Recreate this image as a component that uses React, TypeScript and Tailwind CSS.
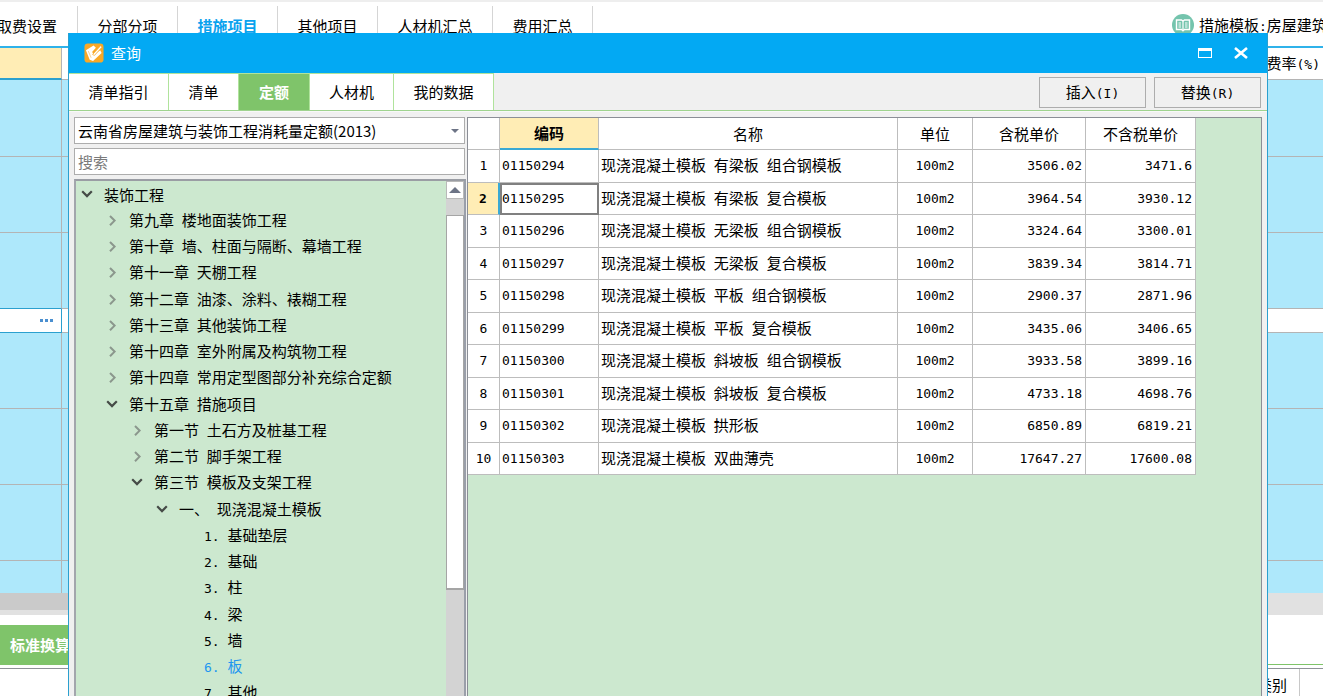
import { useState } from "react";
import clsx from "clsx";

type TreeNode = {
    label: string;
    level: number;
    state?: "open" | "closed";
}

type Quota = {
    code: string;
    name: string;
    taxPrice: string;
    price: string;
}

const projectTabs = ["分部分项", "措施项目", "其他项目", "人材机汇总", "费用汇总"];

const dialogTabs = [
    { label: "清单指引", width: "w-[100px]" },
    { label: "清单", width: "w-[70px]" },
    { label: "定额", width: "w-[71px]" },
    { label: "人材机", width: "w-[84px]" },
    { label: "我的数据", width: "w-[100px]" },
];

const tree: TreeNode[] = [
    { label: "装饰工程", level: 0, state: "open" },
    { label: "第九章 楼地面装饰工程", level: 1, state: "closed" },
    { label: "第十章 墙、柱面与隔断、幕墙工程", level: 1, state: "closed" },
    { label: "第十一章 天棚工程", level: 1, state: "closed" },
    { label: "第十二章 油漆、涂料、裱糊工程", level: 1, state: "closed" },
    { label: "第十三章 其他装饰工程", level: 1, state: "closed" },
    { label: "第十四章 室外附属及构筑物工程", level: 1, state: "closed" },
    { label: "第十四章 常用定型图部分补充综合定额", level: 1, state: "closed" },
    { label: "第十五章 措施项目", level: 1, state: "open" },
    { label: "第一节 土石方及桩基工程", level: 2, state: "closed" },
    { label: "第二节 脚手架工程", level: 2, state: "closed" },
    { label: "第三节 模板及支架工程", level: 2, state: "open" },
    { label: "一、 现浇混凝土模板", level: 3, state: "open" },
    { label: "1. 基础垫层", level: 4 },
    { label: "2. 基础", level: 4 },
    { label: "3. 柱", level: 4 },
    { label: "4. 梁", level: 4 },
    { label: "5. 墙", level: 4 },
    { label: "6. 板", level: 4 },
    { label: "7. 其他", level: 4 },
];

const indent = ["pl-0", "pl-[25px]", "pl-[50px]", "pl-[75px]", "pl-[100px]"];

const quotas: Quota[] = [
    { code: "01150294", name: "现浇混凝土模板 有梁板 组合钢模板", taxPrice: "3506.02", price: "3471.6" },
    { code: "01150295", name: "现浇混凝土模板 有梁板 复合模板", taxPrice: "3964.54", price: "3930.12" },
    { code: "01150296", name: "现浇混凝土模板 无梁板 组合钢模板", taxPrice: "3324.64", price: "3300.01" },
    { code: "01150297", name: "现浇混凝土模板 无梁板 复合模板", taxPrice: "3839.34", price: "3814.71" },
    { code: "01150298", name: "现浇混凝土模板 平板 组合钢模板", taxPrice: "2900.37", price: "2871.96" },
    { code: "01150299", name: "现浇混凝土模板 平板 复合模板", taxPrice: "3435.06", price: "3406.65" },
    { code: "01150300", name: "现浇混凝土模板 斜坡板 组合钢模板", taxPrice: "3933.58", price: "3899.16" },
    { code: "01150301", name: "现浇混凝土模板 斜坡板 复合模板", taxPrice: "4733.18", price: "4698.76" },
    { code: "01150302", name: "现浇混凝土模板 拱形板", taxPrice: "6850.89", price: "6819.21" },
    { code: "01150303", name: "现浇混凝土模板 双曲薄壳", taxPrice: "17647.27", price: "17600.08" },
];

const mono = "font-['DejaVu_Sans_Mono','Noto_Sans_CJK_SC',monospace] text-[13px]";

// latin characters and spaces take half the width of a chinese one
function Mixed({ text }: { text: string }) {
    return (
        <>
            {text.split(/([\x20-\x7e]+)/).map((part, i) =>
                i % 2 ? <span key={i} className={clsx(mono, "whitespace-pre")}>{part}</span> : part
            )}
        </>
    )
}

function Chevron({ open }: { open: boolean }) {
    return open ? (
        <svg width="12" height="12" viewBox="0 0 12 12" fill="none" stroke="#454b47" strokeWidth="2.2">
            <path d="M1.2 2.3 L6 7.1 L10.8 2.3" />
        </svg>
    ) : (
        <svg width="12" height="12" viewBox="0 0 12 12" fill="none" stroke="#8b978d" strokeWidth="2">
            <path d="M4 1 L8.6 5.6 L4 10.2" />
        </svg>
    )
}

function BackgroundPage() {
    // heights of the rows in the sheet behind the dialog
    const rows = ["h-[77px]", "h-[76px]", "h-[76px]", "h-6", "h-[76px]", "h-[76px]", "h-[76px]", "h-8"];
    return (
        <div className="h-screen flex flex-col overflow-hidden bg-white">
            <div className="flex shrink-0 h-12 pt-1 items-start border-t-2 border-t-[#eeeeee] border-b-2 border-b-[#2fb2ea] overflow-hidden">
                <nav className="flex shrink-0 -ml-[23px]">
                    <a href="#fee" className="w-[101px] h-10 flex items-center justify-center border-r border-[#d5d5d5]">取费设置</a>
                    {projectTabs.map((tab) => (
                        <a
                            key={tab}
                            href="#tab"
                            className={clsx(
                                "h-10 flex items-center justify-center border-r border-[#d5d5d5]",
                                tab.length > 4 ? "w-[115px]" : "w-[100px]",
                                tab === "措施项目" && "font-bold text-[#0aa2ee]"
                            )}
                        >
                            {tab}
                        </a>
                    ))}
                </nav>
                <div className="ml-auto shrink-0 w-[152px] h-10 flex items-center gap-1 overflow-hidden whitespace-nowrap">
                    <svg className="shrink-0" width="24" height="24" viewBox="0 0 24 24">
                        <circle cx="12" cy="11" r="11" fill="#74c4ad" />
                        <path d="M5.5 6 H10.5 L12 7 L13.5 6 H18.5 V15.5 H13.5 L12 16.8 L10.5 15.5 H5.5 Z" fill="none" stroke="#fff" strokeWidth="1.4" />
                        <path d="M12 7 V16 M7.5 9 H10 M7.5 11 H10 M7.5 13 H10 M14 9 H16.5 M14 11 H16.5 M14 13 H16.5" stroke="#fff" strokeWidth="1.2" />
                    </svg>
                    <span><Mixed text="措施模板:房屋建筑" /></span>
                </div>
            </div>

            <table className="w-full shrink-0 table-fixed border-separate border-spacing-0">
                <colgroup>
                    <col className="w-[62px]" />
                    <col />
                    <col className="w-[75px]" />
                </colgroup>
                <thead>
                    <tr className="h-8">
                        <th className="bg-[#ffedb5] border-r border-r-[#b4b4b4] border-b-2 border-b-[#2ba0cf]"></th>
                        <th className="border-b border-[#b4b4b4]"></th>
                        <th className="p-0 border-b border-[#b4b4b4] pr-[3px] font-normal text-right whitespace-nowrap"><Mixed text="费率(%)" /></th>
                    </tr>
                </thead>
                <tbody>
                    {rows.map((height, i) => {
                        const editing = i === 3
                        const last = i === rows.length - 1
                        return (
                            <tr key={i} className={clsx(height, editing ? "bg-white" : "bg-[#aee8fb]")}>
                                <td className={clsx(
                                    "p-0 pr-2 border-r border-[#b4b4b4]",
                                    !last && "border-b",
                                    i === 2 && "border-b-[#2ba0cf]",
                                    editing && "border-b-[#2ba0cf] border-r-[#2ba0cf]"
                                )}>
                                    {editing && (
                                        <button aria-label="更多" className="flex gap-0.5 ml-auto">
                                            <i className="size-[3px] bg-[#4a8fd0]" />
                                            <i className="size-[3px] bg-[#4a8fd0]" />
                                            <i className="size-[3px] bg-[#4a8fd0]" />
                                        </button>
                                    )}
                                </td>
                                <td className={clsx("p-0 border-[#b4b4b4]", !last && "border-b")}></td>
                                <td className={clsx("p-0 border-[#b4b4b4]", !last && "border-b")}></td>
                            </tr>
                        )
                    })}
                </tbody>
            </table>

            <div className="flex shrink-0 h-[22px] bg-[#e1e1e1]">
                <div className="w-1/2 h-[17px] bg-[#cacaca]"></div>
            </div>
            <div className="flex shrink-0 items-end h-[50px] border-b border-[#7fc46a]">
                <button className="h-[39px] w-24 pl-2.5 bg-[#7fc46a] text-left font-bold text-white">标准换算</button>
            </div>
            <div className="flex grow mt-[3px] border-t border-[#8e9298]">
                <div className="ml-auto w-[75px] pt-1.5 pr-3 mr-[23px] border-r border-[#c8c8c8] text-right">类别</div>
            </div>
        </div>
    )
}

function QuotaTree({ selected, onSelect }: { selected: string, onSelect: (label: string) => void }) {
    return (
        <div className="flex grow min-h-0 mt-1 border-2 border-b-0 border-t-[#9a9da4] border-l-[#a3a6ad] border-r-[#9a9fa9] bg-[#cce8cf]">
            <ul className="grow overflow-hidden">
                {tree.map((node) => (
                    <li key={node.label} className={clsx("h-[26px] nth-[4n+1]:h-[27px] flex items-center", indent[node.level])}>
                        <span className="w-7 pl-[5px] shrink-0">
                            {node.state && <Chevron open={node.state === "open"} />}
                        </span>
                        <button
                            onClick={() => onSelect(node.label)}
                            className={clsx("whitespace-nowrap", node.label === selected && "text-[#1e96f0]")}
                        >
                            <Mixed text={node.label} />
                        </button>
                    </li>
                ))}
            </ul>
            <div className="shrink-0 w-[18px] flex flex-col bg-[#d3d3d3]">
                <button aria-label="向上滚动" className="h-[18px] flex items-center justify-center bg-white border border-[#b9b9b9]">
                    <svg width="12" height="6" viewBox="0 0 12 6"><path d="M0 6 L6 0 L12 6 Z" fill="#6d7486" /></svg>
                </button>
                <div className="mt-4 h-[375px] shrink-0 bg-white border border-b-2 border-[#a5a5a5]"></div>
            </div>
        </div>
    )
}

function QuotaTable() {
    const [current, setCurrent] = useState(1)
    const head = "p-0 font-normal border-r border-b border-[#bdbdbd]"
    const cell = "p-0 border-r border-b border-[#bdbdbd]"
    return (
        <table className="table-fixed w-[728px] border-separate border-spacing-0 bg-white">
            <colgroup>
                <col className="w-8" />
                <col className="w-[99px]" />
                <col className="w-[299px]" />
                <col className="w-[75px]" />
                <col className="w-[113px]" />
                <col className="w-[110px]" />
            </colgroup>
            <thead>
                <tr className="h-8">
                    <th className={head}></th>
                    <th className="p-0 font-bold bg-[#ffedb5] border-r border-r-[#bdbdbd] border-b-2 border-b-[#3aa9d4]">编码</th>
                    <th className={head}>名称</th>
                    <th className={head}>单位</th>
                    <th className={head}>含税单价</th>
                    <th className={head}>不含税单价</th>
                </tr>
            </thead>
            <tbody>
                {quotas.map((q, i) => {
                    const active = i === current
                    return (
                        <tr key={q.code} className="odd:h-[33px] even:h-8" onClick={() => setCurrent(i)}>
                            <th className={clsx(
                                mono,
                                "p-0 border-b border-b-[#bdbdbd]",
                                active ? "font-bold bg-[#ffedb5] border-r-2 border-r-[#3aa9d4]" : "font-normal border-r border-r-[#bdbdbd]"
                            )}>
                                {i + 1}
                            </th>
                            <td className={clsx(cell, mono, "pl-0.5", active && "outline-2 -outline-offset-2 outline-[#808080]")}>{q.code}</td>
                            <td className={clsx(cell, "pl-0.5 whitespace-nowrap")}><Mixed text={q.name} /></td>
                            <td className={clsx(cell, mono, "text-center")}>100m2</td>
                            <td className={clsx(cell, mono, "pr-[3px] text-right")}>{q.taxPrice}</td>
                            <td className={clsx(cell, mono, "pr-[3px] text-right")}>{q.price}</td>
                        </tr>
                    )
                })}
            </tbody>
        </table>
    )
}

function QueryDialog() {
    const [tab, setTab] = useState("定额")
    const [node, setNode] = useState("6. 板")
    return (
        <div role="dialog" aria-label="查询" className="absolute top-[33px] bottom-0 left-[68px] right-[55px] flex flex-col bg-[#f0f0f0] border-x border-[#2ba0cf] overflow-hidden">
            <div className="flex shrink-0 items-center h-10 pl-4 pr-[19px] -mx-px bg-[#03a9f3] text-white">
                <svg width="20" height="20" viewBox="0 0 21 21">
                    <rect x="0.5" y="0.5" width="20" height="20" rx="3.5" fill="#f9a826" />
                    <path d="M2 7.5 L10 2.5 L12.5 5 L8.5 9.5 L10.5 12 L17 7.5 L18.5 10.5 L9.5 19 L6 17.5 Z" fill="#fff" />
                    <path d="M9 12 L17.5 2.8 L19 4.3 L11 13 Z" fill="#fff" stroke="#f9a826" strokeWidth="0.8" />
                    <path d="M4.5 8.5 L7.5 15.5" stroke="#f9c878" strokeWidth="0.8" />
                </svg>
                <h1 className="ml-[7px]">查询</h1>
                <button aria-label="最大化" className="ml-auto">
                    <svg width="16" height="12" viewBox="0 0 16 12" fill="none" stroke="#fff">
                        <rect x="1.5" y="1.5" width="13" height="9" />
                        <path d="M1 2.5 H15" strokeWidth="3" />
                    </svg>
                </button>
                <button aria-label="关闭" className="ml-5">
                    <svg width="16" height="12" viewBox="0 0 16 12" fill="none" stroke="#fff" strokeWidth="2.6">
                        <path d="M2 1 L14 11 M14 1 L2 11" />
                    </svg>
                </button>
            </div>

            <div className="flex shrink-0 h-[38px] border-b border-[#9fd38f]">
                {dialogTabs.map((t) => (
                    <button
                        key={t.label}
                        onClick={() => setTab(t.label)}
                        className={clsx(
                            "border-t border-r border-[#b0e39c]",
                            t.width,
                            t.label === tab ? "bg-[#7fc46a] font-bold text-white" : "bg-white"
                        )}
                    >
                        {t.label}
                    </button>
                ))}
                <div className="ml-auto flex items-center gap-2 pt-0.5 pr-1.5">
                    <button className="w-[107px] h-[31px] border border-[#adadad]"><Mixed text="插入(I)" /></button>
                    <button className="w-[107px] h-[31px] border border-[#adadad]"><Mixed text="替换(R)" /></button>
                </div>
            </div>

            <div className="flex grow min-h-0 gap-px pt-[5px] px-[5px] border-t border-[#f8f8f8]">
                <div className="w-[392px] shrink-0 flex flex-col">
                    <div className="relative shrink-0 mr-px">
                        <select aria-label="定额库" className="block w-full h-[27px] pl-[3px] appearance-none bg-white border border-[#adadad]">
                            <option>云南省房屋建筑与装饰工程消耗量定额(2013)</option>
                        </select>
                        <svg className="absolute right-1.5 top-3 pointer-events-none" width="8" height="4" viewBox="0 0 8 4">
                            <path d="M0 0 H8 L4 4 Z" fill="#6d7486" />
                        </svg>
                    </div>
                    <input
                        type="text"
                        aria-label="搜索"
                        placeholder="搜索"
                        className="shrink-0 h-[27px] mt-1 mr-px pl-[3px] bg-white border border-[#adadad] placeholder:text-[#7a7a7a] focus:outline-none"
                    />
                    <QuotaTree selected={node} onSelect={setNode} />
                </div>
                <div className="grow min-w-0 overflow-hidden bg-[#cce8cf] border border-b-0 border-[#8b8e96]">
                    <QuotaTable />
                </div>
            </div>
        </div>
    )
}

export default function App() {
    return (
        <div className="relative overflow-hidden text-[15px] leading-5 text-black font-['Noto_Sans_CJK_SC',sans-serif]">
            <BackgroundPage />
            <QueryDialog />
        </div>
    )
}
